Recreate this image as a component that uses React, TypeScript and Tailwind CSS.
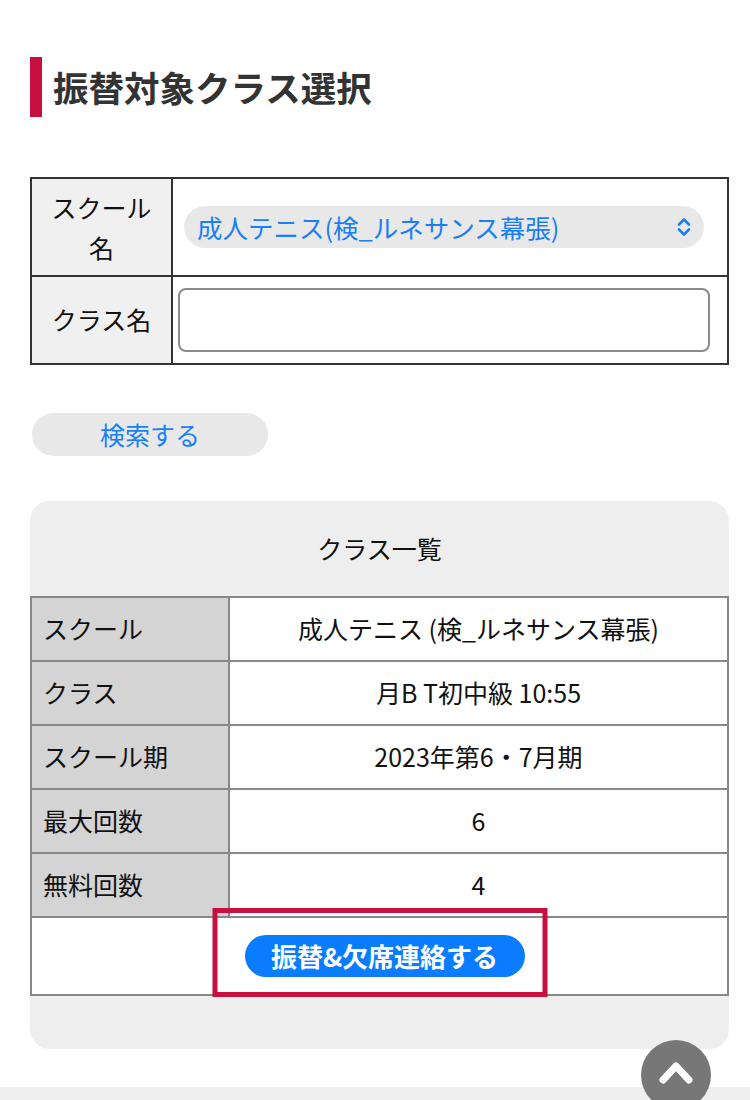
import React from 'react';

const font = { fontFamily: '"Noto Sans CJK JP", "Noto Sans", sans-serif' };

const classRows: { label: string; value: string }[] = [
  { label: 'スクール', value: '成人テニス (検_ルネサンス幕張)' },
  { label: 'クラス', value: '月B T初中級 10:55' },
  { label: 'スクール期', value: '2023年第6・7月期' },
  { label: '最大回数', value: '6' },
  { label: '無料回数', value: '4' },
];

const App: React.FC = () => {
  return (
    <div className="relative w-[750px] h-[1100px] overflow-hidden bg-white text-[#111]" style={font}>
      <div className="pl-[30px] pr-[21px] pt-[57px]">
        {/* Title */}
        <div className="flex items-center h-[60px]">
          <div className="w-[12px] h-[60px] bg-[#c8103f]"></div>
          <h1 className="ml-[11px] text-[35.5px] font-bold text-[#333] leading-none">振替対象クラス選択</h1>
        </div>

        {/* Search form */}
        <table className="mt-[60px] w-full border-collapse border-2 border-[#333]">
          <tbody>
            <tr className="h-[98px]">
              <th className="w-[141px] border-2 border-[#333] bg-[#f0f0f0] px-[14px] text-[25px] font-normal leading-[40px]">
                スクール名
              </th>
              <td className="border-2 border-[#333] pl-[11px] pr-[23px]">
                <div className="flex items-center h-[42px] rounded-full bg-[#e8e8e8] pl-[13px] pr-[12px]">
                  <span className="flex-1 text-[25.5px] text-[#1a7ff5] leading-none">成人テニス(検_ルネサンス幕張)</span>
                  <svg width="16" height="20" viewBox="0 0 16 20" fill="none" stroke="#1a7ff5" strokeWidth="2.6" strokeLinecap="round" strokeLinejoin="round">
                    <path d="M3 7.5 8 2.5l5 5" />
                    <path d="M3 12.5l5 5 5-5" />
                  </svg>
                </div>
              </td>
            </tr>
            <tr className="h-[88px]">
              <th className="border-2 border-[#333] bg-[#f0f0f0] px-[10px] text-[25px] font-normal">クラス名</th>
              <td className="border-2 border-[#333] pl-[5px] pr-[17px]">
                <div className="h-[64px] rounded-[8px] border-2 border-[#8a8a8a] bg-white"></div>
              </td>
            </tr>
          </tbody>
        </table>

        {/* Search button */}
        <button className="mt-[48px] ml-[2px] flex items-center justify-center w-[236px] h-[43px] rounded-full bg-[#e8e8e8] text-[25px] text-[#1a7ff5]">
          検索する
        </button>

        {/* Class list */}
        <div className="mt-[45px] rounded-[20px] bg-[#eeeeee] pb-[53px]">
          <div className="h-[95px] flex items-center justify-center text-[25px]">クラス一覧</div>
          <table className="w-full border-collapse">
            <tbody>
              {classRows.map((row) => (
                <tr key={row.label} className="h-[64px]">
                  <th className="w-[198px] border-2 border-[#888] bg-[#d4d4d4] pl-[11px] text-left text-[25px] font-normal">
                    {row.label}
                  </th>
                  <td className="border-2 border-[#888] bg-white text-center text-[25px]">{row.value}</td>
                </tr>
              ))}
              <tr className="h-[78px]">
                <td colSpan={2} className="border-2 border-[#888] bg-white">
                  <div className="relative flex justify-center">
                    <div className="absolute top-[-27px] left-1/2 -translate-x-1/2 w-[335px] h-[89px] border-[5px] border-[#c8103f]"></div>
                    <button className="relative left-[5px] w-[280px] h-[42px] rounded-full bg-[#0a7cff] text-white text-[26px] font-bold leading-none">
                      振替&amp;欠席連絡する
                    </button>
                  </div>
                </td>
              </tr>
            </tbody>
          </table>
        </div>
      </div>

      {/* Footer band */}
      <div className="absolute left-0 right-0 bottom-0 h-[13px] bg-[#efefef]"></div>

      {/* Scroll to top */}
      <div className="absolute left-[641px] top-[1040px] w-[70px] h-[70px] rounded-full bg-[#777] flex items-start justify-center pt-[20px]">
        <svg width="34" height="24" viewBox="0 0 34 24" fill="none" stroke="white" strokeWidth="7" strokeLinecap="round" strokeLinejoin="round">
          <path d="M4 20 17 6l13 14" />
        </svg>
      </div>
    </div>
  );
};

export default App;
